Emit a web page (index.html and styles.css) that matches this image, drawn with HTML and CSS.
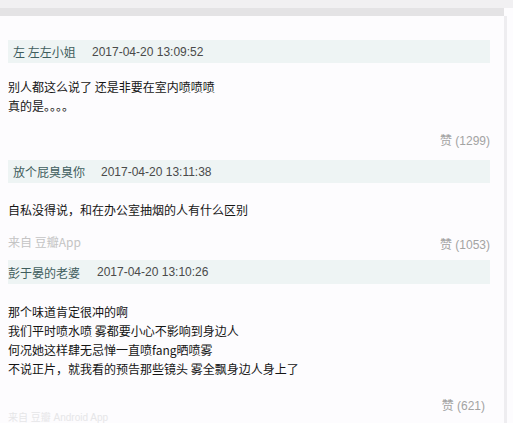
FILE: index.html
```html
<!DOCTYPE html>
<html>
<head>
<meta charset="utf-8">
<link rel="stylesheet" href="styles.css">
</head>
<body>
<div class="topbar"></div>
<div class="topbar2"></div>
<div class="page">
  <div class="comment c1">
    <div class="head"><span class="name">左 左左小姐</span><span class="date">2017-04-20 13:09:52</span></div>
    <div class="text">别人都这么说了 还是非要在室内喷喷喷<br>真的是。。。。</div>
    <div class="foot"><span class="src"></span><span class="like">赞 (1299)</span></div>
  </div>
  <div class="comment c2">
    <div class="head"><span class="name">放个屁臭臭你</span><span class="date">2017-04-20 13:11:38</span></div>
    <div class="text">自私没得说，和在办公室抽烟的人有什么区别</div>
    <div class="foot"><span class="src">来自 豆瓣App</span><span class="like">赞 (1053)</span></div>
  </div>
  <div class="comment c3">
    <div class="head"><span class="name">彭于晏的老婆</span><span class="date">2017-04-20 13:10:26</span></div>
    <div class="text">那个味道肯定很冲的啊<br>我们平时喷水喷 雾都要小心不影响到身边人<br>何况她这样肆无忌惮一直喷fang晒喷雾<br>不说正片，就我看的预告那些镜头 雾全飘身边人身上了</div>
    <div class="foot"><span class="src"></span><span class="like">赞 (621)</span></div>
  </div>
  <div class="cut">来自 豆瓣 Android App</div>
</div>
</body>
</html>
```
FILE: styles.css
```css
html, body {
  margin: 0;
  padding: 0;
  background: #fdfcfe;
  width: 513px;
  height: 423px;
  overflow: hidden;
  font-family: "Liberation Sans", "Noto Sans CJK SC", sans-serif;
  font-size: 12px;
}
.topbar {
  height: 8px;
  background: #f1f0f2;
}
.topbar2 {
  height: 8px;
  width: 504px;
  background: #e4e3e5;
}
.page {
  box-sizing: border-box;
  width: 507px;
  height: 407px;
  padding-left: 8px;
  padding-right: 14px;
  padding-top: 24px;
  border-right: 3px solid #eeedf0;
}
.head {
  height: 23px;
  background: #eef4f4;
  display: flex;
  align-items: center;
  padding-left: 5px;
  box-sizing: border-box;
}
.name {
  color: #3f5d5d;
  font-family: "Noto Sans CJK SC", sans-serif;
  font-size: 12px;
  width: 79px;
}
.c2 .name { width: 88px; }
.c3 .head { padding-left: 0; height: 24px; }
.c3 .name { width: 89px; }
.date {
  color: #4a4a4a;
  font-size: 12px;
}
.text {
  font-family: "Noto Sans CJK SC", sans-serif;
  color: #151515;
  font-size: 12px;
  line-height: 19px;
  margin-top: 14px;
}
.c2 .text { margin-top: 17px; }
.c3 .text { margin-top: 18px; }
.foot {
  display: flex;
  justify-content: space-between;
  align-items: flex-end;
  line-height: 19px;
  margin-top: 17px;
  height: 19px;
  margin-bottom: 9px;
}
.c2 .foot { margin-top: 13px; margin-bottom: 9px; }
.c3 .foot { margin-top: 19px; margin-bottom: 0; }
.src {
  color: #c4c4c4;
  font-family: "Noto Sans CJK SC", sans-serif;
}
.like {
  color: #a3a3a3;
  font-family: "Liberation Sans", "Noto Sans CJK SC", sans-serif;
}
.c2 .like { position: relative; top: 4px; }
.c3 .like { padding-right: 5px; }
.cut {
  color: #e6e6e8;
  font-size: 10px;
  line-height: 12px;
  margin-top: -4px;
}
```
